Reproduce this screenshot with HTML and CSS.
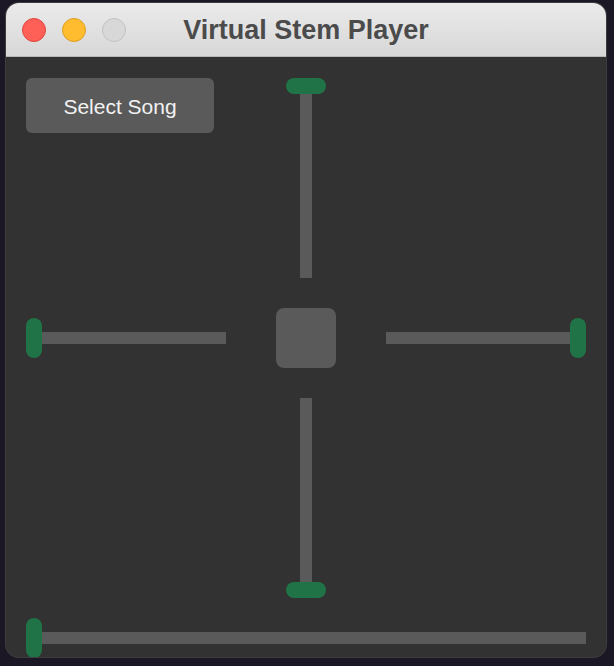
FILE: index.html
```html
<!DOCTYPE html>
<html>
<head>
<meta charset="utf-8">
<link rel="stylesheet" href="styles.css">
</head>
<body>
<div class="window">
  <div class="titlebar">
    <div class="lights">
      <span class="light red"></span>
      <span class="light yellow"></span>
      <span class="light grey"></span>
    </div>
    <div class="title">Virtual Stem Player</div>
  </div>
  <div class="content">
    <div class="cross">
      <button class="select-btn">Select Song</button>
      <div class="slider vertical top">
        <span class="thumb"></span><span class="track"></span>
      </div>
      <div class="slider horizontal left">
        <span class="thumb"></span><span class="track"></span>
      </div>
      <div class="center-pad"></div>
      <div class="slider horizontal right">
        <span class="track"></span><span class="thumb"></span>
      </div>
      <div class="slider vertical bottom">
        <span class="track"></span><span class="thumb"></span>
      </div>
    </div>
    <div class="slider horizontal master">
      <span class="thumb"></span><span class="track"></span>
    </div>
  </div>
</div>
</body>
</html>
```
FILE: styles.css
```css
html, body {
  margin: 0;
  padding: 0;
}
body {
  width: 614px;
  height: 666px;
  background: #1b1725;
  font-family: "Liberation Sans", Arial, sans-serif;
  overflow: hidden;
}
.window {
  margin: 3px 0 0 6px;
  width: 600px;
  height: 654px;
  border-radius: 13px;
  overflow: hidden;
  background: #323232;
  box-shadow: 0 0 0 1px #3d3d3d;
  display: flex;
  flex-direction: column;
}
.titlebar {
  height: 53px;
  flex: none;
  background: linear-gradient(#ebebeb, #d7d7d7);
  border-bottom: 1px solid #b9b9b9;
  position: relative;
  display: flex;
  align-items: center;
  justify-content: center;
}
.lights {
  position: absolute;
  left: 16px;
  top: 15px;
  display: flex;
  gap: 16px;
}
.light {
  width: 22px;
  height: 22px;
  border-radius: 50%;
  border: 1px solid;
  display: block;
}
.red { background: #fe5f57; border-color: #e1453f; }
.yellow { background: #febc2e; border-color: #dc9f22; }
.grey { background: #d8d8d8; border-color: #c2c2c2; }
.title {
  font-size: 27px;
  font-weight: bold;
  color: #4b4b4b;
  margin-top: 1px;
}
.content {
  height: 600px;
  padding: 21px 20px 0 20px;
  box-sizing: border-box;
  display: flex;
  flex-direction: column;
}
.cross {
  display: grid;
  grid-template-columns: 200px 60px 200px;
  grid-template-rows: 200px 60px 200px;
  column-gap: 50px;
  row-gap: 30px;
}
.select-btn {
  grid-column: 1;
  grid-row: 1;
  align-self: start;
  width: 188px;
  height: 55px;
  border: none;
  border-radius: 6px;
  background: #5a5a5a;
  color: #f2f2f2;
  font-family: "Liberation Sans", Arial, sans-serif;
  font-size: 21px;
  padding: 2px 0 0 0;
}
.slider { display: flex; align-items: center; }
.slider.vertical { flex-direction: column; width: 40px; justify-self: center; }
.slider.horizontal { height: 40px; align-self: center; }
.thumb {
  display: block;
  flex: none;
  background: #207346;
  border-radius: 8px;
}
.track {
  display: block;
  background: #5a5a5a;
  flex: 1;
}
.vertical .thumb { width: 40px; height: 16px; }
.vertical .track { width: 12px; }
.horizontal .thumb { width: 16px; height: 40px; }
.horizontal .track { height: 12px; }
.top { grid-column: 2; grid-row: 1; }
.left { grid-column: 1; grid-row: 2; }
.center-pad {
  grid-column: 2;
  grid-row: 2;
  background: #5a5a5a;
  border-radius: 8px;
}
.right { grid-column: 3; grid-row: 2; }
.bottom { grid-column: 2; grid-row: 3; }
.master { margin-top: 20px; width: 560px; }
```
